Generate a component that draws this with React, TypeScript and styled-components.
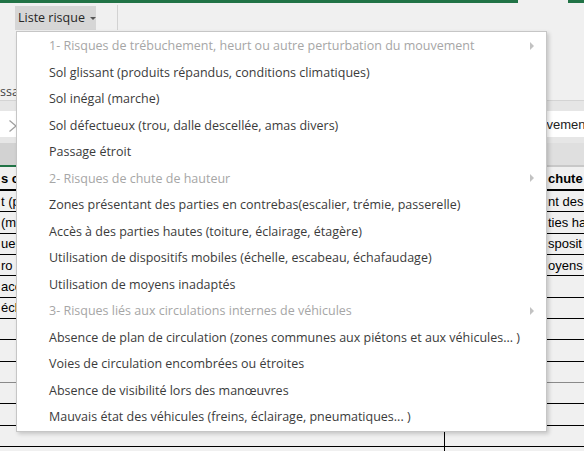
import styled, { createGlobalStyle } from 'styled-components';

const GlobalStyle = createGlobalStyle`
  html, body {
    margin: 0;
    padding: 0;
    background: #f0f0f0;
    overflow: hidden;
  }
`;

const Fenetre = styled.div`
  width: 584px;
  height: 451px;
  overflow: hidden;
  background: #f0f0f0;
  font-family: 'Open Sans', 'Noto Sans', sans-serif;
`;

const BandeTitre = styled.div`
  display: flex;
  height: 3px;
`;

const SegmentVert = styled.div<{ $w?: number }>`
  background: #217346;
  ${(p) => (p.$w ? `width: ${p.$w}px;` : 'flex: 1;')}
`;

const EspaceOnglet = styled.div`
  width: 50px;
`;

const Ruban = styled.div`
  height: 97px;
  display: flex;
  flex-direction: column;
  justify-content: space-between;
  border-bottom: 1px solid #d4d4d4;
`;

const LigneBoutons = styled.div`
  display: flex;
  align-items: center;
  padding: 2px 0 0 15px;
`;

const Ancre = styled.div`
  position: relative;
`;

const BoutonListe = styled.button`
  display: flex;
  align-items: center;
  gap: 5px;
  width: 81px;
  height: 24px;
  padding: 0 0 0 3px;
  border: 0;
  background: #d6d6d6;
  color: #262626;
  font: 12.5px 'Open Sans', sans-serif;
`;

const Caret = styled.span`
  width: 0;
  height: 0;
  margin-top: 1px;
  border-left: 3px solid transparent;
  border-right: 3px solid transparent;
  border-top: 3px solid #555;
`;

const Separateur = styled.div`
  width: 1px;
  height: 25px;
  margin-left: 21px;
  background: #d2d2d2;
`;

const LibelleGroupe = styled.div`
  font-size: 12.5px;
  line-height: 14px;
  padding-bottom: 1px;
  color: #444;
  white-space: nowrap;
`;

const Menu = styled.ul`
  position: absolute;
  top: calc(100% + 1px);
  left: 1px;
  z-index: 10;
  width: 531px;
  margin: 0;
  padding: 1px 0;
  list-style: none;
  box-sizing: border-box;
  background: #fff;
  border: 1px solid #c6c6c6;
  box-shadow: 2px 2px 4px rgba(0, 0, 0, 0.18);
`;

const Item = styled.li<{ $titre?: boolean }>`
  display: flex;
  align-items: center;
  justify-content: space-between;
  height: 26.5px;
  padding: 0 12px 0 32px;
  font-size: 12.5px;
  color: ${(p) => (p.$titre ? '#a6a6a6' : '#3b3b3b')};
  white-space: nowrap;
`;

const Fleche = styled.span`
  border-left: 4px solid #c2c2c2;
  border-top: 4px solid transparent;
  border-bottom: 4px solid transparent;
`;

const Bande = styled.div<{ $h: number }>`
  height: ${(p) => p.$h}px;
  background: #e6e6e6;
`;

const BarreFormule = styled.div`
  height: 26px;
  display: flex;
  align-items: center;
  background: #fff;
`;

const Outils = styled.div`
  width: 175px;
  flex-shrink: 0;
  display: flex;
  align-items: center;
  gap: 14px;
  padding: 3px 0 0 9px;
  box-sizing: border-box;
  color: #a0a0a0;
  font: italic 13px 'Liberation Serif', serif;
`;

const TexteFormule = styled.div`
  font: 13px 'Liberation Sans', Arial, sans-serif;
  color: #222;
  white-space: nowrap;
`;

const Feuille = styled.div`
  overflow: hidden;
`;

const EnteteColonnes = styled.div`
  display: grid;
  grid-template-columns: 445px 102px 200px;
`;

const EnteteCol = styled.div<{ $actif?: boolean }>`
  height: 22px;
  display: flex;
  align-items: center;
  justify-content: center;
  background: ${(p) => (p.$actif ? '#d2d2d2' : '#dfdfdf')};
  border-bottom: 2px solid ${(p) => (p.$actif ? '#217346' : '#c8c8c8')};
  border-right: 1px solid #c4c4c4;
  color: #444;
  font: 13px 'Liberation Sans', Arial, sans-serif;
`;

const Ligne = styled.div<{ $entete?: boolean; $gris?: boolean }>`
  display: grid;
  grid-template-columns: 445px 102px 200px;
  height: ${(p) => (p.$entete ? '24px' : '21.33px')};
  box-sizing: border-box;
  border-bottom: ${(p) => (p.$entete ? '2px solid #000' : p.$gris ? '1px solid #8a8a8a' : '1px solid #000')};
`;

const Cellule = styled.div<{ $gras?: boolean; $bord?: boolean }>`
  display: flex;
  align-items: center;
  padding-left: 1px;
  overflow: hidden;
  white-space: nowrap;
  font: ${(p) => (p.$gras ? 'bold ' : '')}13px 'Liberation Sans', Arial, sans-serif;
  color: #000;
  border-right: ${(p) => (p.$bord ? '1px solid #000' : '0')};
`;

const menu = [
  { t: '1- Risques de trébuchement, heurt ou autre perturbation du mouvement', titre: true },
  { t: 'Sol glissant (produits répandus, conditions climatiques)' },
  { t: 'Sol inégal (marche)' },
  { t: 'Sol défectueux (trou, dalle descellée, amas divers)' },
  { t: 'Passage étroit' },
  { t: '2- Risques de chute de hauteur', titre: true },
  { t: 'Zones présentant des parties en contrebas(escalier, trémie, passerelle)' },
  { t: 'Accès à des parties hautes (toiture, éclairage, étagère)' },
  { t: 'Utilisation de dispositifs mobiles (échelle, escabeau, échafaudage)' },
  { t: 'Utilisation de moyens inadaptés' },
  { t: '3- Risques liés aux circulations internes de véhicules', titre: true },
  { t: 'Absence de plan de circulation (zones communes aux piétons et aux véhicules... )' },
  { t: 'Voies de circulation encombrées ou étroites' },
  { t: 'Absence de visibilité lors des manœuvres' },
  { t: 'Mauvais état des véhicules (freins, éclairage, pneumatiques... )' },
];

const lignes = [
  { a: 't (produits répandus)', c: 'nt des' },
  { a: '(marche)', c: 'ties ha' },
  { a: 'ueux (trou, dalle descellée)', c: 'sposit' },
  { a: 'ro', c: 'oyens' },
  { a: 'accès', c: '' },
  { a: 'éclairage', c: '' },
  { a: '', c: '' },
  { a: '', c: '' },
  { a: '', c: '', gris: true },
  { a: '', c: '' },
  { a: '', c: '' },
  { a: '', c: '' },
  { a: '', c: '' },
];

function App() {
  return (
    <Fenetre>
      <GlobalStyle />
      <BandeTitre>
        <SegmentVert $w={518} />
        <EspaceOnglet />
        <SegmentVert />
      </BandeTitre>

      <Ruban>
        <LigneBoutons>
          <Ancre>
            <BoutonListe>
              Liste risque <Caret />
            </BoutonListe>
            <Menu>
              {menu.map((m) => (
                <Item key={m.t} $titre={m.titre}>
                  <span>{m.t}</span>
                  {m.titre && <Fleche />}
                </Item>
              ))}
            </Menu>
          </Ancre>
          <Separateur />
        </LigneBoutons>
        <LibelleGroupe>ssage</LibelleGroupe>
      </Ruban>

      <Bande $h={10} />
      <BarreFormule>
        <Outils>
          <svg width="14" height="12" viewBox="0 0 14 12">
            <path d="M0.5 0.5 L13.5 11.5 M13.5 0.5 L0.5 11.5" stroke="#a0a0a0" strokeWidth="1.3" fill="none" />
          </svg>
          <svg width="14" height="12" viewBox="0 0 14 12">
            <path d="M1 6 L5 10.5 L13 1" stroke="#a0a0a0" strokeWidth="1.3" fill="none" />
          </svg>
          <span>fx</span>
        </Outils>
        <TexteFormule>1- Risques de trébuchement, heurt ou autre perturbation du mouvement</TexteFormule>
      </BarreFormule>
      <Bande $h={6} />

      <Feuille>
        <EnteteColonnes>
          <EnteteCol $actif>A</EnteteCol>
          <EnteteCol>B</EnteteCol>
          <EnteteCol>C</EnteteCol>
        </EnteteColonnes>
        <Ligne $entete>
          <Cellule $gras $bord>s communs</Cellule>
          <Cellule />
          <Cellule $gras>chute</Cellule>
        </Ligne>
        {lignes.map((l, i) => (
          <Ligne key={i} $gris={l.gris}>
            <Cellule $bord>{l.a}</Cellule>
            <Cellule />
            <Cellule>{l.c}</Cellule>
          </Ligne>
        ))}
      </Feuille>
    </Fenetre>
  );
}

export default App;
